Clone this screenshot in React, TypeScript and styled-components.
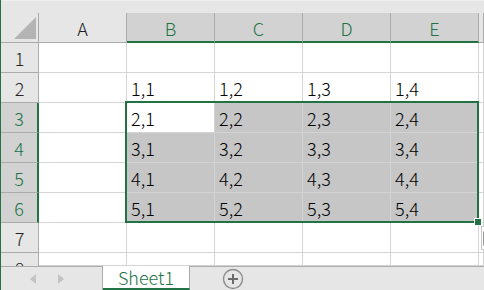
import React from 'react';
import styled, { createGlobalStyle, css } from 'styled-components';

const GREEN = '#217346';
const GRID = '#d4d4d4';
const HEAD_LINE = '#ababab';

const GlobalStyle = createGlobalStyle`
  html, body {
    margin: 0;
    padding: 0;
    overflow: hidden;
    background: #fff;
  }
  body {
    font-family: 'Noto Sans CJK JP', 'Noto Sans', sans-serif;
    font-weight: 300;
  }
`;

const Window = styled.div`
  width: 484px;
  height: 290px;
  border-left: 1px solid ${GREEN};
  box-sizing: border-box;
  display: flex;
  flex-direction: column;
  overflow: hidden;
  background: #fff;
`;

const TopStrip = styled.div`
  height: 13px;
  flex: none;
  background: #e6e6e6;
  border-top: 1px solid #f0f0f0;
  box-sizing: border-box;
`;

const SheetArea = styled.div`
  position: relative;
  flex: none;
  height: 253px;
  overflow: hidden;
`;

const Grid = styled.div`
  display: grid;
  grid-template-columns: 38px repeat(5, 88px) 1fr;
  grid-template-rows: repeat(8, 30px) 13px;
`;

const Corner = styled.div`
  position: relative;
  background: #e6e6e6;
  border-right: 1px solid ${HEAD_LINE};
  border-bottom: 1px solid ${HEAD_LINE};
  box-sizing: border-box;
  &::after {
    content: '';
    position: absolute;
    right: 2px;
    bottom: 3px;
    width: 22px;
    height: 22px;
    background: #b4b4b4;
    clip-path: polygon(100% 0, 100% 100%, 0 100%);
  }
`;

const ColHeader = styled.div<{ $selected?: boolean }>`
  display: flex;
  align-items: flex-end;
  justify-content: center;
  padding-bottom: 5px;
  box-sizing: border-box;
  font-size: 18px;
  line-height: 1;
  background: #e6e6e6;
  color: #222;
  border-right: 1px solid ${HEAD_LINE};
  border-bottom: 1px solid ${HEAD_LINE};
  ${(p) =>
    p.$selected &&
    css`
      background: #d2d2d2;
      color: ${GREEN};
      border-bottom: 2px solid ${GREEN};
      padding-bottom: 4px;
    `}
`;

const RowHeader = styled.div<{ $selected?: boolean; $partial?: boolean }>`
  display: flex;
  align-items: ${(p) => (p.$partial ? 'flex-start' : 'flex-end')};
  justify-content: center;
  padding: ${(p) => (p.$partial ? '6px 0 0' : '0 0 5px')};
  box-sizing: border-box;
  font-size: 18px;
  line-height: 1;
  background: #e6e6e6;
  color: #222;
  border-right: 1px solid ${HEAD_LINE};
  border-bottom: ${(p) => (p.$partial ? 'none' : `1px solid ${HEAD_LINE}`)};
  overflow: hidden;
  ${(p) =>
    p.$selected &&
    css`
      background: #d2d2d2;
      color: ${GREEN};
      border-right: 2px solid ${GREEN};
    `}
`;

const Cell = styled.div<{ $selected?: boolean; $active?: boolean }>`
  display: flex;
  align-items: flex-end;
  padding: 0 0 5px 4px;
  box-sizing: border-box;
  font-size: 18px;
  line-height: 1;
  color: #000;
  background: ${(p) => (p.$selected && !p.$active ? '#c6c6c6' : '#fff')};
  border-right: 1px solid ${GRID};
  border-bottom: 1px solid ${GRID};
  white-space: nowrap;
  overflow: hidden;
`;

const Selection = styled.div`
  position: absolute;
  left: 124px;
  top: 88px;
  width: 354px;
  height: 122px;
  border: 2px solid ${GREEN};
  box-sizing: border-box;
  pointer-events: none;
`;

const FillHandle = styled.div`
  position: absolute;
  left: 473px;
  top: 205px;
  width: 8px;
  height: 8px;
  box-sizing: border-box;
  background: ${GREEN};
  border: 1px solid #fff;
`;

const PasteButton = styled.div`
  position: absolute;
  left: 480px;
  top: 213px;
  width: 26px;
  height: 24px;
  box-sizing: border-box;
  border: 1px solid #c6c6c6;
  background: #fff;
  display: flex;
  align-items: center;
  padding-left: 1px;
`;

const TabBar = styled.div`
  flex: none;
  height: 24px;
  display: flex;
  background: #e6e6e6;
`;

const TabNav = styled.div`
  width: 102px;
  box-sizing: border-box;
  border-top: 1px solid ${HEAD_LINE};
  border-right: 1px solid ${HEAD_LINE};
  display: flex;
  align-items: center;
  gap: 22px;
  padding-left: 29px;
`;

const Arrow = styled.span<{ $dir: 'left' | 'right' }>`
  width: 0;
  height: 0;
  border-top: 5px solid transparent;
  border-bottom: 5px solid transparent;
  ${(p) =>
    p.$dir === 'left'
      ? css`border-right: 6px solid #c3c3c3;`
      : css`border-left: 6px solid #c3c3c3;`}
`;

const SheetTab = styled.div`
  width: 87px;
  box-sizing: border-box;
  background: #fff;
  border-right: 1px solid ${HEAD_LINE};
  border-bottom: 2px solid ${GREEN};
  color: ${GREEN};
  font-size: 18px;
  line-height: 1;
  display: flex;
  align-items: center;
  justify-content: center;
  padding-bottom: 1px;
`;

const TabRest = styled.div`
  flex: 1;
  border-top: 1px solid ${HEAD_LINE};
  display: flex;
  align-items: center;
  padding-left: 32px;
`;

const columns = ['A', 'B', 'C', 'D', 'E'];
const rows = [1, 2, 3, 4, 5, 6, 7, 8];

const cellText = (row: number, col: number): string => {
  if (col === 0 || row < 2 || row > 6) return '';
  return `${row - 1},${col}`;
};

const isSel = (row: number, col: number) => row >= 3 && row <= 6 && col >= 1 && col <= 4;

const App = (): JSX.Element => {
  return (
    <Window>
      <GlobalStyle />
      <TopStrip />
      <SheetArea>
        <Grid>
          <Corner />
          {columns.map((c, i) => (
            <ColHeader key={c} $selected={i >= 1}>
              {c}
            </ColHeader>
          ))}
          <ColHeader />
          {rows.map((r) => (
            <React.Fragment key={r}>
              <RowHeader $selected={r >= 3 && r <= 6} $partial={r === 8}>
                {r}
              </RowHeader>
              {columns.map((c, ci) => (
                <Cell key={c} $selected={isSel(r, ci)} $active={r === 3 && ci === 1}>
                  {cellText(r, ci)}
                </Cell>
              ))}
              <Cell />
            </React.Fragment>
          ))}
        </Grid>
        <Selection />
        <FillHandle />
        <PasteButton>
          <svg width="14" height="16" viewBox="0 0 14 16">
            <rect x="1" y="2" width="11" height="13" fill="none" stroke="#555" strokeWidth="1.2" />
            <rect x="4" y="0.5" width="5" height="3" fill="#555" />
          </svg>
        </PasteButton>
      </SheetArea>
      <TabBar>
        <TabNav>
          <Arrow $dir="left" />
          <Arrow $dir="right" />
        </TabNav>
        <SheetTab>Sheet1</SheetTab>
        <TabRest>
          <svg width="22" height="22" viewBox="0 0 22 22">
            <circle cx="11" cy="11" r="9.5" fill="none" stroke="#8c8c8c" strokeWidth="1.4" />
            <path d="M11 6v10M6 11h10" stroke="#6a6a6a" strokeWidth="2" />
          </svg>
        </TabRest>
      </TabBar>
    </Window>
  );
};

export default App;
